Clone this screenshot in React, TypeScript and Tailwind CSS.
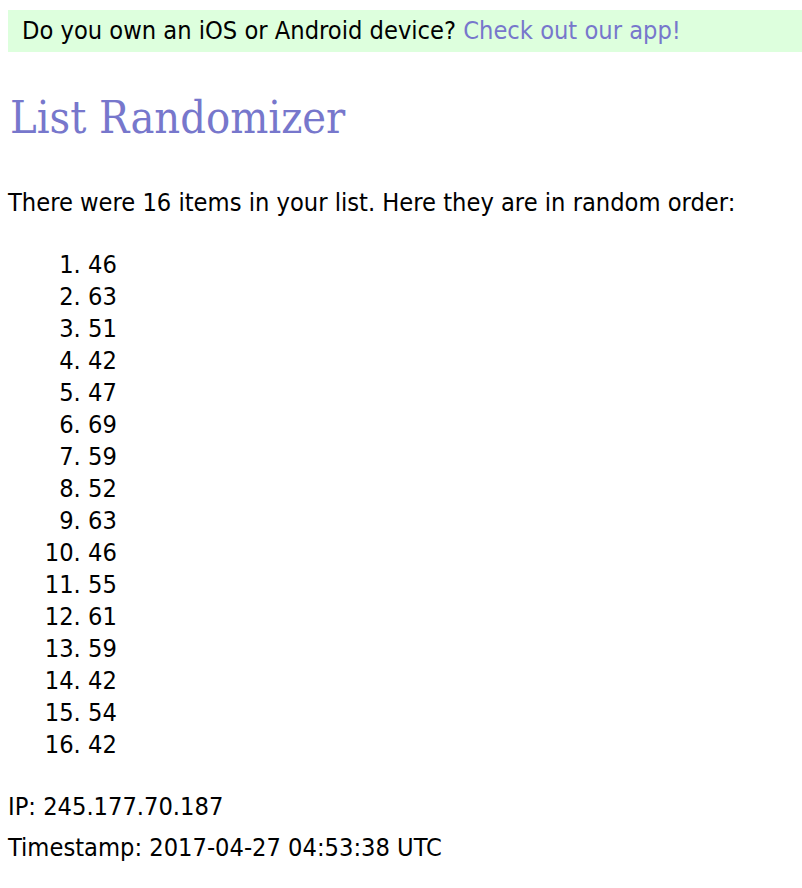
import React from "react";

const items = [46, 63, 51, 42, 47, 69, 59, 52, 63, 46, 55, 61, 59, 42, 54, 42];

export default function App() {
  return (
    <div className="min-h-[888px] bg-white text-black font-['DejaVu_Sans_Condensed','DejaVu_Sans',sans-serif] text-[25.2px]">
      <div className="mt-[10px] ml-2 flex h-[42px] items-center bg-[#ddffdd] pl-[14px] leading-[42px] whitespace-nowrap">
        <span>
          Do you own an iOS or Android device?{" "}
          <a href="#" className="text-[#7777cc] no-underline">
            Check out our app!
          </a>
        </span>
      </div>
      <div className="px-2">
        <h1 className="mt-[40px] ml-[2px] font-['DejaVu_Serif_Condensed','DejaVu_Serif',serif] text-[44.7px] leading-[52px] font-normal text-[#7777cc]">
          List Randomizer
        </h1>
        <p className="mt-[43px] leading-[32px] whitespace-nowrap">
          There were 16 items in your list. Here they are in random order:
        </p>
        <ol className="mt-[30px] list-decimal list-outside pl-[80px] leading-[32px]">
          {items.map((n, i) => (
            <li key={i}>{n}</li>
          ))}
        </ol>
        <p className="mt-[30px] leading-[32px]">IP: 245.177.70.187</p>
        <p className="mt-[9px] leading-[32px]">Timestamp: 2017-04-27 04:53:38 UTC</p>
      </div>
    </div>
  );
}
